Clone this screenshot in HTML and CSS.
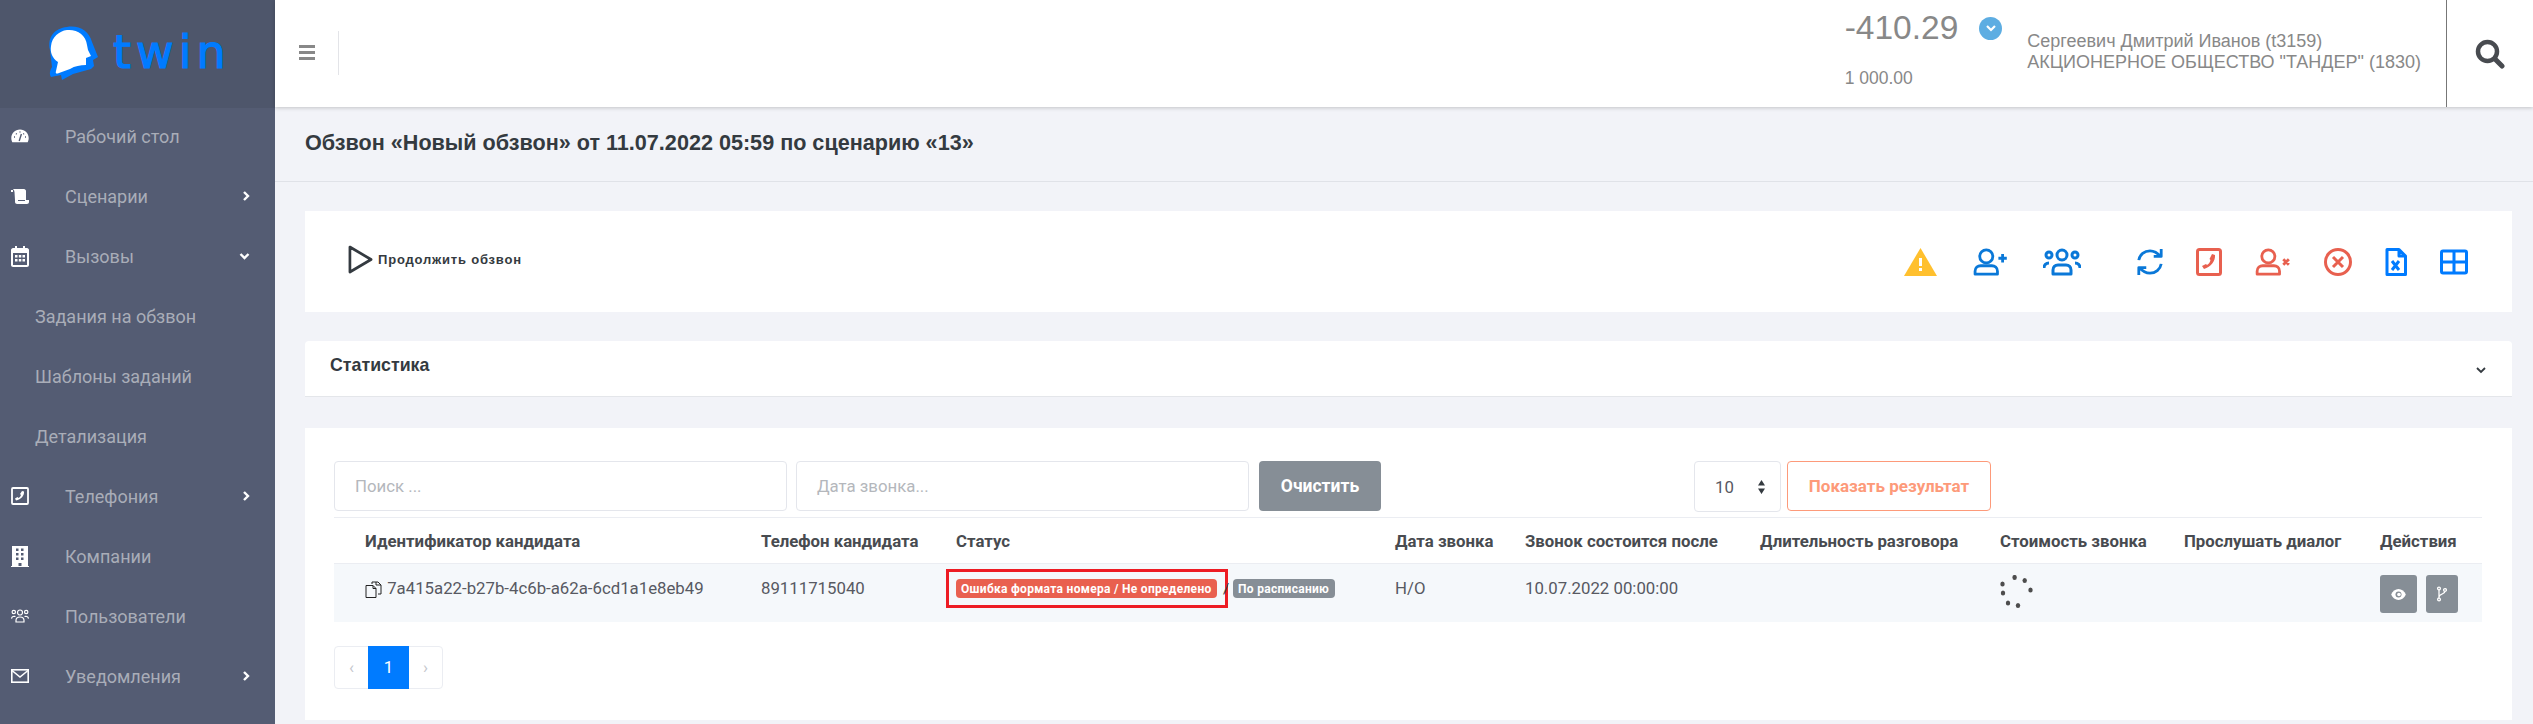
FILE: index.html
```html
<!DOCTYPE html>
<html lang="ru">
  <head>
    <meta charset="UTF-8" />
    <title>Обзвон</title>
    <link rel="stylesheet" href="styles.css">
  </head>
  <body>
    <aside class="sidebar">
      <div class="logo">
        <svg class="logo-mark" viewBox="0 0 52 56">
          <path fill="#007bff" d="M20 2c12-2 22 4 25 15l6 15-5 3 1 6-3 3c-6 2-12 3-18 5l-11 6-1-5-10 2c-2-3-1-7 1-10L3 25C0 12 8 3 20 2z"/>
          <path fill="#fff" d="M20 5c10-1 19 5 20 15l1 5 3 6-5 2v7c-6 0-11 1-16 4l-11 4c-2 1-4 1-3-2l2-9C5 33 3 27 4 21 5 12 12 6 20 5z"/>
        </svg>
        <span class="logo-text">twin</span>
      </div>
      <nav class="nav">
        <a class="nav-item">
          <svg class="nav-icon" viewBox="0 0 18 18"><path fill="#fff" d="M9 2.500C4 2.500.3 6.300.3 11c0 1.800.4 3 1 4.200h15.400c.6-1.200 1-2.400 1-4.200C17.700 6.300 14 2.500 9 2.500z"/><path stroke="#545c73" stroke-width="1.400" d="M8.200 14l2.200-7M3 10h1M5 6.500l.7.7M9 4.500v1M13 6.500l-.7.7M14 10h1"/></svg>
          <span>Рабочий стол</span>
        </a>
        <a class="nav-item">
          <svg class="nav-icon" viewBox="0 0 18 18"><path fill="#fff" d="M0 3h2v2H0zM2 2h11c1 0 2 1 2 2v9h3v2c0 1-1 2-2 2H6c-1 0-2-1-2-2v-2l-.5-8c0-1-.5-2-1.500-3z"/><path stroke="#545c73" d="M7 13.500h7"/></svg>
          <span>Сценарии</span>
          <svg class="nav-arrow" viewBox="0 0 8 10"><path d="M2 1l4 4-4 4"/></svg>
        </a>
        <a class="nav-item">
          <svg class="nav-icon nav-icon-tall" viewBox="0 0 18 21"><path fill="#fff" d="M4 0h2v2h6V0h2v2h2c1 0 2 1 2 2v15c0 1-1 2-2 2H2c-1 0-2-1-2-2V4c0-1 1-2 2-2h2z"/><path fill="#545c73" d="M2 7h14v12H2z"/><path fill="#fff" d="M4 9h2.500v2.500H4zM7.800 9h2.500v2.500H7.800zM11.500 9H14v2.500h-2.500zM4 13h2.500v2.500H4zM7.800 13h2.500v2.500H7.800zM11.500 13H14v2.500h-2.500z"/></svg>
          <span>Вызовы</span>
          <svg class="nav-arrow nav-arrow-down" viewBox="0 0 10 8"><path d="M1 2l4 4 4-4"/></svg>
        </a>
        <a class="nav-item nav-sub"><span>Задания на обзвон</span></a>
        <a class="nav-item nav-sub"><span>Шаблоны заданий</span></a>
        <a class="nav-item nav-sub"><span>Детализация</span></a>
        <a class="nav-item">
          <svg class="nav-icon" viewBox="0 0 18 18"><rect x="1" y="1" width="16" height="16" rx="1" fill="none" stroke="#fff" stroke-width="1.800"/><path fill="#fff" d="M11 4l2 .5c.5 4-3 8-8 9L4 11.500l2.500-1.500 1 1c1-.5 2-1.500 2.500-3l-1-1z"/></svg>
          <span>Телефония</span>
          <svg class="nav-arrow" viewBox="0 0 8 10"><path d="M2 1l4 4-4 4"/></svg>
        </a>
        <a class="nav-item">
          <svg class="nav-icon nav-icon-tall" viewBox="0 0 18 21"><path fill="#fff" d="M1 0h16v20h1v1H0v-1h1z"/><path fill="#545c73" d="M5 2.500h2.500V5H5zM10 2.500h2.500V5H10zM5 7h2.500v2.500H5zM10 7h2.500v2.500H10zM5 11.500h2.500V14H5zM10 11.500h2.500V14H10zM7.500 17h3v3h-3z"/></svg>
          <span>Компании</span>
        </a>
        <a class="nav-item">
          <svg class="nav-icon" viewBox="0 0 18 14" fill="none" stroke="#fff" stroke-width="1.200"><circle cx="9" cy="3.500" r="2.500"/><circle cx="2.800" cy="3" r="1.700"/><circle cx="15.200" cy="3" r="1.700"/><path d="M5 13v-1.500C5 9.500 6.500 8 9 8s4 1.500 4 3.500V13zM.5 9.500C1 7.500 3 7 4.500 7.500M17.500 9.500c-.5-2-2.500-2.500-4-2"/></svg>
          <span>Пользователи</span>
        </a>
        <a class="nav-item">
          <svg class="nav-icon" viewBox="0 0 18 14" fill="none" stroke="#fff" stroke-width="1.600"><rect x=".8" y=".8" width="16.400" height="12.400"/><path d="M1 1.500l8 6.500 8-6.500"/></svg>
          <span>Уведомления</span>
          <svg class="nav-arrow" viewBox="0 0 8 10"><path d="M2 1l4 4-4 4"/></svg>
        </a>
      </nav>
    </aside>

    <div class="main">
      <header class="topbar">
        <div class="menu-btn"><span></span><span></span><span></span></div>
        <div class="balance">
          <div class="balance-row">
            <span class="balance-value">-410.29</span>
            <span class="balance-toggle">
              <svg viewBox="0 0 10 8"><path d="M1 2l4 4 4-4"/></svg>
            </span>
          </div>
          <div class="balance-limit">1 000.00</div>
        </div>
        <div class="user-info">
          <div>Сергеевич Дмитрий Иванов (t3159)</div>
          <div>АКЦИОНЕРНОЕ ОБЩЕСТВО "ТАНДЕР" (1830)</div>
        </div>
        <div class="search-btn">
          <svg viewBox="0 0 30 30"><circle cx="12.500" cy="12.500" r="9.500" fill="none" stroke="#484b50" stroke-width="4.500"/><path stroke="#484b50" stroke-width="5" stroke-linecap="round" d="M20 20l7 7"/></svg>
        </div>
      </header>

      <div class="page-title">
        <h1>Обзвон «Новый обзвон» от 11.07.2022 05:59 по сценарию «13»</h1>
      </div>

      <div class="content">
        <section class="card toolbar">
          <a class="play-btn">
            <svg viewBox="0 0 26 30"><path fill="none" stroke="#343a40" stroke-width="2.800" stroke-linejoin="round" d="M2 2l22 13L2 28z"/></svg>
            <span>Продолжить обзвон</span>
          </a>
          <div class="tools">
            <svg class="tool tool-warn" viewBox="0 0 33 28"><path fill="#ffc02e" d="M16.500 0L33 28H0z"/><path fill="#fff" d="M15 10h3v8h-3zM15 20h3v3h-3z"/></svg>
            <svg class="tool tool-adduser ink-blue" viewBox="0 0 36 30"><circle cx="14" cy="9" r="7"/><path d="M2 28v-3c0-4 3-6 6-6h12c3 0 6 2 6 6v3zM27 11h9M31.500 6.500v9"/></svg>
            <svg class="tool tool-users ink-blue" viewBox="0 0 38 28"><circle cx="19" cy="7" r="5"/><circle cx="6" cy="7" r="3"/><circle cx="32" cy="7" r="3"/><path d="M10 26v-4c0-3 2-5 5-5h8c3 0 5 2 5 5v4zM1 20c0-3 2-5 5-5M37 20c0-3-2-5-5-5"/></svg>
            <svg class="tool tool-refresh ink-blue" viewBox="0 0 30 30"><path d="M3 13C4 7 9 3 15 3c5 0 8 2 11 6M27 17c-1 6-6 10-12 10-5 0-8-2-11-6M27 1v8h-8M3 29v-8h8"/></svg>
            <svg class="tool tool-phone ink-red" viewBox="0 0 26 28"><rect x="1.500" y="1.500" width="23" height="25" rx="2"/><path class="solid" d="M16 6l3 1c.5 6-4 12-11 14l-2-3 4-2 1 1c2-1 3-3 3.500-5l-1-1z"/></svg>
            <svg class="tool tool-deluser ink-red" viewBox="0 0 36 30"><circle cx="13" cy="9" r="7"/><path d="M1 28v-3c0-4 3-6 6-6h12c3 0 6 2 6 6v3zM29 12l6 6M35 12l-6 6"/></svg>
            <svg class="tool tool-close ink-red" viewBox="0 0 28 28"><circle cx="14" cy="14" r="12.500"/><path stroke-width="3" d="M9 9l10 10M19 9L9 19"/></svg>
            <svg class="tool tool-excel ink-azure" viewBox="0 0 22 28"><path d="M2 1.500h12l6.500 6.500v18.500H2zM14 1.500V8h6.500"/><path d="M7 13l7 9M14 13l-7 9"/></svg>
            <svg class="tool tool-table ink-azure" viewBox="0 0 28 28"><rect x="1.500" y="3" width="25" height="22" rx="1.500"/><path d="M14 3v22M1.500 14h25"/></svg>
          </div>
        </section>

        <section class="card stats">
          <span class="stats-title">Статистика</span>
          <svg class="stats-arrow" viewBox="0 0 10 8"><path d="M1 2l4 4 4-4"/></svg>
        </section>

        <section class="card results">
          <div class="filters">
            <div class="field field-wide">Поиск ...</div>
            <div class="field field-wide">Дата звонка...</div>
            <div class="btn-clear">Очистить</div>
            <div class="field-select">
              <span>10</span>
              <svg viewBox="0 0 8 14"><path d="M4 0l3.500 5.500h-7zM4 14L.5 8.500h7z"/></svg>
            </div>
            <div class="btn-show">Показать результат</div>
          </div>

          <table class="grid">
            <colgroup>
              <col class="c-id"><col class="c-phone"><col class="c-status"><col class="c-date"><col class="c-after"><col class="c-dur"><col class="c-cost"><col class="c-listen"><col class="c-act">
            </colgroup>
            <thead>
              <tr>
                <th>Идентификатор кандидата</th>
                <th>Телефон кандидата</th>
                <th>Статус</th>
                <th>Дата звонка</th>
                <th>Звонок состоится после</th>
                <th>Длительность разговора</th>
                <th>Стоимость звонка</th>
                <th>Прослушать диалог</th>
                <th>Действия</th>
              </tr>
            </thead>
            <tbody>
              <tr>
                <td>
                  <svg class="copy-icon" viewBox="0 0 17 17" fill="none" stroke="#222"><path d="M7 3V1h6l3 3v9h-3M11 1v3h5"/><path fill="#f5f8fb" d="M1 4.500h7l3 3v9H1zM8 4.500v3h3"/></svg>
                  <span>7a415a22-b27b-4c6b-a62a-6cd1a1e8eb49</span>
                </td>
                <td>89111715040</td>
                <td>
                  <div class="status">
                    <div class="mark-box"><span class="badge badge-red">Ошибка формата номера / Не определено</span></div>
                    <span class="slash">/</span>
                    <span class="badge badge-grey">По расписанию</span>
                  </div>
                </td>
                <td>Н/О</td>
                <td>10.07.2022 00:00:00</td>
                <td></td>
                <td>
                  <svg class="spinner" viewBox="0 0 34 34" fill="#4d4d4d"><ellipse cx="14.600" cy="2.500" rx="2.200" ry="2.600"/><ellipse cx="24.700" cy="5.500" rx="2.200" ry="2.600"/><ellipse cx="30.500" cy="15" rx="2.200" ry="2.600"/><ellipse cx="2.500" cy="9" rx="2.200" ry="2.600"/><ellipse cx="3" cy="18" rx="2.200" ry="2.600"/><ellipse cx="8" cy="28" rx="2.200" ry="2.600"/><ellipse cx="18" cy="30.500" rx="2.200" ry="2.600"/></svg>
                </td>
                <td></td>
                <td>
                  <div class="actions">
                    <span class="btn-act btn-eye">
                      <svg viewBox="0 0 16 12" fill="#fff"><path d="M8 0C4.500 0 1.500 2.500 0 6c1.500 3.500 4.500 6 8 6s6.500-2.500 8-6c-1.500-3.500-4.500-6-8-6z"/><circle cx="8" cy="6" r="3.300" fill="#868e96"/><circle cx="8.500" cy="6" r="2" fill="#fff"/></svg>
                    </span>
                    <span class="btn-act btn-branch">
                      <svg viewBox="0 0 10 16" fill="none" stroke="#fff" stroke-width="1.300"><circle cx="2" cy="2.500" r="1.400"/><circle cx="2" cy="13.500" r="1.400"/><circle cx="8" cy="4" r="1.400"/><path d="M2 4v8M8 5.500C8 8 2 8 2 11"/></svg>
                    </span>
                  </div>
                </td>
              </tr>
            </tbody>
          </table>

          <div class="pager">
            <span class="pager-item">‹</span>
            <span class="pager-item pager-active">1</span>
            <span class="pager-item">›</span>
          </div>
        </section>
      </div>
    </div>
  </body>
</html>
```

FILE: styles.css
```css
* {
  box-sizing: border-box;
}

html,
body {
  height: 100%;
}

body {
  margin: 0;
  display: flex;
  overflow: hidden;
  background: #f2f3f8;
  color: #484b50;
  font-family: Roboto, "Liberation Sans", sans-serif;
  font-size: 16.8px;
}

/* sidebar */

.sidebar {
  width: 275px;
  flex-shrink: 0;
  background: #545c73;
}

.logo {
  height: 108px;
  display: flex;
  align-items: flex-start;
  padding: 25px 0 0 47px;
  background: #4e566b;
}

.logo-mark {
  width: 52px;
  height: 56px;
}

.logo-text {
  margin: -3px 0 0 14px;
  color: #007bff;
  font-family: "DejaVu Sans", sans-serif;
  font-size: 46px;
  line-height: 60px;
  letter-spacing: 5px;
  -webkit-text-stroke: 1.2px #007bff;
}

.nav {
  margin-top: -2px;
}

.nav-item {
  height: 60px;
  display: flex;
  align-items: center;
  padding-left: 11px;
  color: #a9adb8;
  font-size: 18px;
}

.nav-item > span {
  margin-left: 36px;
}

.nav-sub {
  padding-left: 35px;
}

.nav-sub > span {
  margin-left: 0;
}

.nav-icon {
  width: 18px;
  height: 18px;
  flex-shrink: 0;
}

.nav-icon-tall {
  height: 21px;
}

.nav-arrow {
  width: 8px;
  height: 10px;
  margin-left: auto;
  margin-right: 25px;
  fill: none;
  stroke: #fff;
  stroke-width: 2.4;
}

.nav-arrow-down {
  width: 11px;
  height: 8px;
}

/* header */

.main {
  flex: 1;
  min-width: 0;
}

.topbar {
  height: 107px;
  display: flex;
  background: #fff;
  box-shadow: 0 1px 4px rgba(0, 0, 0, 0.2);
  color: #888;
  font-family: "Liberation Sans", sans-serif;
}

.menu-btn {
  width: 64px;
  height: 44px;
  margin-top: 31px;
  padding: 14px 0 0 24px;
  border-right: 1px solid #e3e4e8;
}

.menu-btn span {
  display: block;
  width: 16px;
  height: 3px;
  margin-bottom: 3px;
  background: #888;
}

.balance {
  margin-left: auto;
  padding-top: 9px;
}

.balance-row {
  display: flex;
  align-items: center;
  height: 38px;
}

.balance-value {
  font-size: 33.500px;
}

.balance-toggle {
  width: 23px;
  height: 23px;
  margin-left: 21px;
  display: flex;
  align-items: center;
  justify-content: center;
  border-radius: 50%;
  background: #5dade2;
}

.balance-toggle svg {
  width: 10px;
  height: 8px;
  fill: none;
  stroke: #fff;
  stroke-width: 2.2;
}

.balance-limit {
  margin-top: 21px;
  font-size: 17.500px;
}

.user-info {
  margin-left: 25px;
  padding-top: 31px;
  font-size: 18px;
  line-height: 21px;
}

.search-btn {
  width: 87px;
  margin-left: 25px;
  display: flex;
  align-items: center;
  justify-content: center;
  border-left: 1px solid #777;
}

.search-btn svg {
  width: 30px;
  height: 30px;
}

.page-title {
  height: 75px;
  padding: 21px 30px 0;
  border-bottom: 1px solid #e0e2e8;
}

.page-title h1 {
  margin: 0;
  color: #343a40;
  font-family: "Liberation Sans", sans-serif;
  font-size: 21.600px;
  font-weight: 700;
  line-height: 30px;
}

/* cards */

.content {
  padding: 29px 21px 0 30px;
}

.card {
  background: #fff;
}

.toolbar {
  height: 101px;
  display: flex;
  align-items: center;
  padding-left: 43px;
}

.play-btn {
  display: flex;
  align-items: center;
  gap: 5px;
  margin-top: -4px;
  color: #343a40;
  font-family: "Liberation Sans", sans-serif;
  font-size: 13px;
  font-weight: 700;
  letter-spacing: 0.800px;
}

.play-btn svg {
  width: 25px;
  height: 29px;
}

.tools {
  margin-left: auto;
  display: flex;
  align-items: center;
  padding-right: 44px;
}

.tool {
  height: 28px;
  flex-shrink: 0;
}

.tool-warn { width: 33px; margin-right: 35px; }
.tool-adduser { width: 36px; margin-right: 35px; }
.tool-users { width: 38px; margin-right: 54px; }
.tool-refresh { width: 30px; margin-right: 31px; }
.tool-phone { width: 26px; margin-right: 33px; }
.tool-deluser { width: 36px; margin-right: 33px; }
.tool-close { width: 28px; margin-right: 33px; }
.tool-excel { width: 22px; margin-right: 33px; }
.tool-table { width: 28px; }

.ink-blue,
.ink-red,
.ink-azure {
  fill: none;
  stroke-width: 3;
  stroke-linejoin: round;
}

.ink-blue { stroke: #0a78d8; }
.ink-red { stroke: #e8604f; }
.ink-azure { stroke: #007bff; }

.ink-red .solid {
  fill: #e8604f;
  stroke: none;
}

.stats {
  height: 56px;
  margin-top: 29px;
  display: flex;
  align-items: center;
  padding: 0 26px 6px 25px;
  border-radius: 4px 4px 0 0;
  border-bottom: 1px solid #e4e6ea;
}

.stats-title {
  color: #343a40;
  font-family: "Liberation Sans", sans-serif;
  font-size: 17.800px;
  font-weight: 700;
}

.stats-arrow {
  width: 10px;
  height: 8px;
  margin-left: auto;
  margin-top: 8px;
  fill: none;
  stroke: #343a40;
  stroke-width: 1.8;
}

.results {
  height: 292px;
  margin-top: 31px;
  padding: 33px 30px 0 29px;
}

/* filters */

.filters {
  display: flex;
  align-items: flex-start;
  height: 56px;
}

.field {
  height: 50px;
  display: flex;
  align-items: center;
  padding-left: 20px;
  border: 1px solid #e4e6ec;
  border-radius: 4px;
  color: #b4b7bc;
}

.field-wide {
  width: 453px;
  margin-right: 9px;
}

.btn-clear {
  width: 122px;
  height: 50px;
  margin-left: 1px;
  display: flex;
  align-items: center;
  justify-content: center;
  border-radius: 4px;
  background: #868e96;
  color: #fff;
  font-weight: 700;
  font-size: 17.500px;
}

.field-select {
  width: 87px;
  height: 51px;
  margin-left: 313px;
  display: flex;
  align-items: center;
  justify-content: space-between;
  padding: 0 14px 0 20px;
  border: 1px solid #e4e6ec;
  border-radius: 4px;
  color: #575962;
}

.field-select svg {
  width: 9px;
  height: 14px;
  fill: #343a40;
}

.btn-show {
  width: 204px;
  height: 50px;
  margin-left: 6px;
  display: flex;
  align-items: center;
  justify-content: center;
  border: 1px solid #fd9a7a;
  border-radius: 4px;
  color: #fd9a7a;
  font-weight: 700;
  font-size: 17px;
}

/* table */

.grid {
  width: 2148px;
  table-layout: fixed;
  border-collapse: collapse;
  border-top: 1px solid #ebedf2;
}

.c-id { width: 427px; }
.c-phone { width: 195px; }
.c-status { width: 439px; }
.c-date { width: 130px; }
.c-after { width: 235px; }
.c-dur { width: 240px; }
.c-cost { width: 184px; }
.c-listen { width: 196px; }
.c-act { width: 102px; }

.grid th,
.grid td {
  padding: 0;
  text-align: left;
  white-space: nowrap;
}

.grid th:first-child,
.grid td:first-child {
  padding-left: 31px;
}

.grid th {
  height: 46px;
  border-bottom: 1px solid #ebedf2;
  color: #484b50;
  font-weight: 700;
}

.grid td {
  height: 58px;
  padding-top: 14px;
  vertical-align: top;
  background: #f5f8fb;
  color: #575962;
}

.grid td:first-child > span {
  margin-left: 1px;
}

.copy-icon {
  width: 17px;
  height: 17px;
  vertical-align: -4px;
}

.status {
  display: flex;
  align-items: center;
  margin: -9px 0 0 -10px;
}

.mark-box {
  width: 282px;
  height: 39px;
  display: flex;
  align-items: center;
  padding-left: 7px;
  border: 3px solid #ed1c24;
}

.badge {
  height: 19px;
  display: inline-flex;
  align-items: center;
  padding: 0 5px;
  border-radius: 4px;
  color: #fff;
  font-size: 12px;
  font-weight: 700;
  letter-spacing: 0.300px;
}

.badge-red {
  width: 261px;
  background: #e9604f;
}

.badge-grey {
  width: 102px;
  background: #868e96;
}

.slash {
  width: 5px;
  margin: 0 0 0 -5px;
  color: #343a40;
  font-size: 15px;
}

.mark-box + .slash + .badge {
  margin-left: 5px;
}

.spinner {
  width: 34px;
  height: 34px;
  display: block;
  margin-top: -3px;
}

.actions {
  display: flex;
  gap: 9px;
  margin-top: -3px;
}

.btn-act {
  height: 38px;
  display: flex;
  align-items: center;
  justify-content: center;
  border-radius: 3px;
  background: #868e96;
}

.btn-eye {
  width: 37px;
}

.btn-eye svg {
  width: 15px;
  height: 11px;
}

.btn-branch {
  width: 32px;
}

.btn-branch svg {
  width: 10px;
  height: 16px;
}

/* pagination */

.pager {
  width: 109px;
  height: 43px;
  margin-top: 24px;
  display: flex;
  border: 1px solid #ebedf2;
  border-radius: 4px;
  color: #c4c6cc;
}

.pager-item {
  width: 33px;
  display: flex;
  align-items: center;
  justify-content: center;
}

.pager-active {
  width: 41px;
  margin: -1px 0;
  background: #007bff;
  color: #fff;
}
```
